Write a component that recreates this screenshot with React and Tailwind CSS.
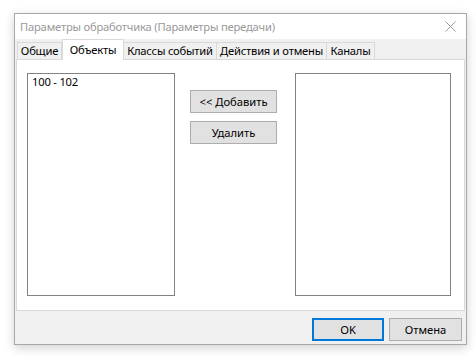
import React from "react";

const TABS = [
  { name: "Общие", w: "w-[45px]" },
  { name: "Объекты", w: "w-[62px]", active: true },
  { name: "Классы событий", w: "w-[94px]" },
  { name: "Действия и отмены", w: "w-[111px]" },
  { name: "Каналы", w: "w-[49px]" },
];

const Button = ({ children, primary, className = "" }) => (
  <div
    className={`flex items-center justify-center h-[23px] bg-[#e1e1e1] text-black whitespace-nowrap ${
      primary ? "border-2 border-[#0078d7]" : "border border-[#adadad]"
    } ${className}`}
  >
    {children}
  </div>
);

const App = () => {
  return (
    <div
      className="w-[476px] h-[360px] bg-white pt-[13px] pl-[14px] text-[11.2px] leading-none text-black"
      style={{ fontFamily: '"Noto Sans", "Open Sans", sans-serif' }}
    >
      {/* window */}
      <div className="w-[453px] h-[332px] border border-[#a8a8a8] flex flex-col shadow-[0_3px_10px_rgba(0,0,0,0.18)]">
        {/* title bar */}
        <div className="h-[25px] bg-white flex items-center justify-between pl-[5px] pr-[9px]">
          <span className="text-[#999999] tracking-[-0.2px] whitespace-nowrap">Параметры обработчика (Параметры передачи)</span>
          <svg width="11" height="11" viewBox="0 0 11 11" className="mr-[1px]">
            <path d="M0.5 0.5 L10.5 10.5 M10.5 0.5 L0.5 10.5" stroke="#9a9a9a" strokeWidth="1" />
          </svg>
        </div>

        {/* client */}
        <div className="flex-1 bg-[#f0f0f0] flex flex-col">
          {/* tabs */}
          <div className="flex items-end h-[20px] pl-[2px]">
            {TABS.map((tab) =>
              tab.active ? (
                <div
                  key={tab.name}
                  className={`${tab.w} h-[21px] -mb-[1px] bg-white border border-b-0 border-[#d9d9d9] flex items-start justify-center pt-[4px] relative z-10 tracking-[-0.2px] whitespace-nowrap`}
                >
                  {tab.name}
                </div>
              ) : (
                <div
                  key={tab.name}
                  className={`${tab.w} h-[17px] bg-[#f0f0f0] border border-b-0 border-[#d9d9d9] -ml-[1px] first:ml-0 flex items-center justify-center tracking-[-0.2px] whitespace-nowrap`}
                >
                  {tab.name}
                </div>
              )
            )}
          </div>

          {/* panel */}
          <div className="mx-[1px] h-[252px] bg-white border border-[#d9d9d9] flex pt-[13px] pl-[10px]">
            <div className="w-[148px] h-[223px] border border-[#828282] pl-[4px] pt-[2px] tracking-[-0.2px]">100 - 102</div>
            <div className="flex flex-col gap-[8px] ml-[15px] mt-[17px]">
              <Button className="w-[87px]">&lt;&lt; Добавить</Button>
              <Button className="w-[87px]">Удалить</Button>
            </div>
            <div className="w-[156px] h-[223px] border border-[#828282] ml-[18px]" />
          </div>

          {/* footer */}
          <div className="flex-1 flex justify-end items-start pt-[7px] pr-[4px] gap-[5px]">
            <Button primary className="w-[72px]">OK</Button>
            <Button className="w-[73px]">Отмена</Button>
          </div>
        </div>
      </div>
    </div>
  );
};

export default App;
